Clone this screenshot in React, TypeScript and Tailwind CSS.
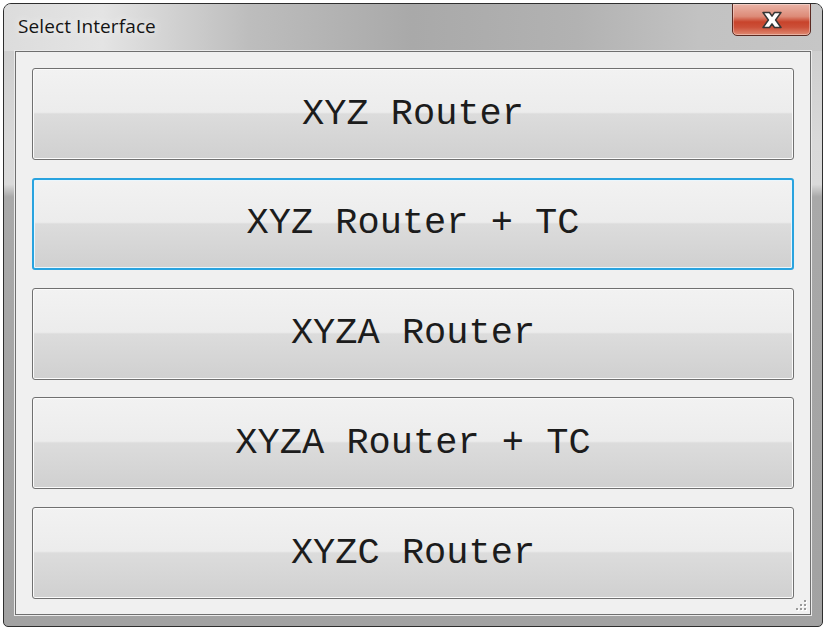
import React, { useState } from 'react';

const ROUTERS = ['XYZ Router', 'XYZ Router + TC', 'XYZA Router', 'XYZA Router + TC', 'XYZC Router'];

function CloseGlyph() {
  return (
    <svg width="24" height="18" viewBox="0 0 24 18">
      <path
        d="M3 1.5 H9.5 L12 5.2 L14.5 1.5 H21 L15.6 9 L21 16.5 H14.5 L12 12.8 L9.5 16.5 H3 L8.4 9 Z"
        fill="#ffffff"
        stroke="#363636"
        strokeWidth="1.5"
        strokeLinejoin="round"
      />
    </svg>
  );
}

function ResizeGrip() {
  const dots = [
    [10, 2],
    [6, 6],
    [10, 6],
    [2, 10],
    [6, 10],
    [10, 10],
  ];
  return (
    <svg width="13" height="13" viewBox="0 0 13 13" className="absolute right-[3px] bottom-[3px]">
      {dots.map(([x, y], i) => (
        <g key={i}>
          <rect x={x + 1} y={y + 1} width="2" height="2" fill="#ffffff" />
          <rect x={x} y={y} width="2" height="2" fill="#9a9a9a" />
        </g>
      ))}
    </svg>
  );
}

function RouterButton({ label, focused, onClick }: { label: string; focused: boolean; onClick: () => void }) {
  return (
    <button
      onClick={onClick}
      className={
        focused
          ? 'h-[92px] w-full rounded-[3px] border-2 border-[#29a3df] bg-[linear-gradient(#f2f2f2_0%,#ececec_48%,#dcdcdc_50%,#d0d0d0_100%)] shadow-[inset_0_0_0_1px_#e9f6fd] flex items-center justify-center'
          : 'h-[92px] w-full rounded-[3px] border border-[#707070] bg-[linear-gradient(#f2f2f2_0%,#ececec_48%,#dcdcdc_50%,#d0d0d0_100%)] shadow-[inset_0_0_0_1px_#fbfbfb] flex items-center justify-center'
      }
    >
      <span className="font-['Courier_New','FreeMono','Nimbus_Mono_PS','Nimbus_Mono_L','Liberation_Mono',monospace] text-[37px] leading-none text-[#1c1c1c] whitespace-pre">
        {label}
      </span>
    </button>
  );
}

export default function App() {
  const [selected, setSelected] = useState(1);

  return (
    <div className="w-[826px] h-[630px] bg-white pt-[3px] pl-[3px] pr-[3px] pb-[3px] font-['Open_Sans','Liberation_Sans',sans-serif]">
      <div className="relative h-[624px] w-[820px] rounded-t-[8px] rounded-b-[5px] border border-[#2e2e2e] bg-[linear-gradient(180deg,#c9c9c9_0%,#d9d9d9_22%,#dadada_29%,#a9a9a9_31%,#a2a2a2_100%)] flex flex-col overflow-hidden">
        <div className="h-[47px] shrink-0 flex items-start justify-between bg-[linear-gradient(90deg,#dcdcdc_0%,#e4e4e4_12%,#bdbdbd_30%,#a9a9a9_50%,#b2b2b2_70%,#c2c2c2_85%,#c6c6c6_100%)]">
          <div className="pl-[14px] pt-[10px] text-[19px] leading-[24px] tracking-[0.1px] text-[#141414] [text-shadow:0_0_8px_#ffffff]">
            Select Interface
          </div>
          <div className="mr-[11px] -mt-px w-[79px] h-[33px] rounded-b-[5px] border border-[#5b2a22] bg-[linear-gradient(180deg,#eab4a7_0%,#dd8b78_40%,#c8432b_58%,#cc5039_75%,#df8a72_100%)] shadow-[inset_0_0_0_1px_rgba(255,255,255,0.35)] flex items-center justify-center">
            <CloseGlyph />
          </div>
        </div>
        <div className="flex-1 mx-[11px] mb-[11px] border border-[#6f6f6f] shadow-[0_0_0_1px_#eaeaea] bg-[#f0f0f0] relative flex flex-col justify-between pt-[16px] pb-[15px] px-[16px]">
          {ROUTERS.map((r, i) => (
            <RouterButton key={r} label={r} focused={selected === i} onClick={() => setSelected(i)} />
          ))}
          <ResizeGrip />
        </div>
      </div>
    </div>
  );
}
